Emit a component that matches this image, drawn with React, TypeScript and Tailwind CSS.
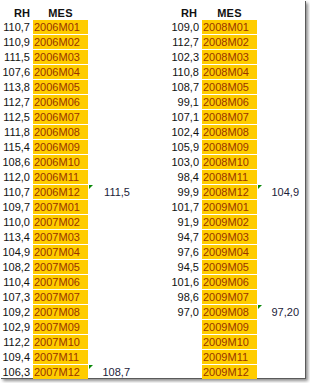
import React from "react";

type Row = {
  rh: string;
  mes: string;
  note?: string;
};

const left: Row[] = [
  { rh: "110,7", mes: "2006M01" },
  { rh: "110,9", mes: "2006M02" },
  { rh: "111,5", mes: "2006M03" },
  { rh: "107,6", mes: "2006M04" },
  { rh: "113,8", mes: "2006M05" },
  { rh: "112,7", mes: "2006M06" },
  { rh: "112,5", mes: "2006M07" },
  { rh: "111,8", mes: "2006M08" },
  { rh: "115,4", mes: "2006M09" },
  { rh: "108,6", mes: "2006M10" },
  { rh: "112,0", mes: "2006M11" },
  { rh: "110,7", mes: "2006M12", note: "111,5" },
  { rh: "109,7", mes: "2007M01" },
  { rh: "110,0", mes: "2007M02" },
  { rh: "113,4", mes: "2007M03" },
  { rh: "104,9", mes: "2007M04" },
  { rh: "108,2", mes: "2007M05" },
  { rh: "110,4", mes: "2007M06" },
  { rh: "107,3", mes: "2007M07" },
  { rh: "109,2", mes: "2007M08" },
  { rh: "102,9", mes: "2007M09" },
  { rh: "112,2", mes: "2007M10" },
  { rh: "109,4", mes: "2007M11" },
  { rh: "106,3", mes: "2007M12", note: "108,7" },
];

const right: Row[] = [
  { rh: "109,0", mes: "2008M01" },
  { rh: "112,7", mes: "2008M02" },
  { rh: "102,3", mes: "2008M03" },
  { rh: "110,8", mes: "2008M04" },
  { rh: "108,7", mes: "2008M05" },
  { rh: "99,1", mes: "2008M06" },
  { rh: "107,1", mes: "2008M07" },
  { rh: "102,4", mes: "2008M08" },
  { rh: "105,9", mes: "2008M09" },
  { rh: "103,0", mes: "2008M10" },
  { rh: "98,4", mes: "2008M11" },
  { rh: "99,9", mes: "2008M12", note: "104,9" },
  { rh: "101,7", mes: "2009M01" },
  { rh: "91,9", mes: "2009M02" },
  { rh: "94,7", mes: "2009M03" },
  { rh: "97,6", mes: "2009M04" },
  { rh: "94,5", mes: "2009M05" },
  { rh: "101,6", mes: "2009M06" },
  { rh: "98,6", mes: "2009M07" },
  { rh: "97,0", mes: "2009M08", note: "97,20" },
  { rh: "", mes: "2009M09" },
  { rh: "", mes: "2009M10" },
  { rh: "", mes: "2009M11" },
  { rh: "", mes: "2009M12" },
];

const Mark = () => (
  <span className="absolute left-[1px] top-0 h-0 w-0 border-t-[4px] border-r-[4px] border-t-[#0a8a0a] border-r-transparent" />
);

const NoteCell = ({ note, pad }: { note?: string; pad: string }) => (
  <div className={`relative h-[14px] text-right text-[#1c1c3a] ${pad}`}>
    {note && <Mark />}
    {note}
  </div>
);

export default function App() {
  return (
    <div className="h-[383px] w-[310px] bg-white">
      <div
        className="h-[378px] w-[305px] bg-white pt-[5px] text-[11px] leading-[14px] text-[#111] shadow-[1px_1px_0_#5a5a5a,3px_3px_3px_rgba(0,0,0,0.45)]"
        style={{ fontFamily: '"Liberation Sans", Arial, sans-serif' }}
      >
        {/* header */}
        <div className="grid h-[15px] grid-cols-[33px_55px_42px_72px_55px_48px] items-center font-bold">
          <div className="pr-[3px] text-right">RH</div>
          <div className="text-center tracking-[0.3px]">MES</div>
          <div />
          <div className="pr-[5px] text-right">RH</div>
          <div className="text-center tracking-[0.3px]">MES</div>
          <div />
        </div>

        {left.map((l, i) => {
          const r = right[i];
          return (
            <div
              key={l.mes}
              className="grid h-[15px] grid-cols-[33px_55px_42px_72px_55px_48px] items-start"
            >
              <div className="h-[14px] pr-[3px] text-right">{l.rh}</div>
              <div className="h-[14px] bg-[#ffcc00] pl-[1px] text-[#993300]">
                {l.mes}
              </div>
              <NoteCell note={l.note} pad="pr-0" />
              <div className="h-[14px] pr-[3px] text-right">{r.rh}</div>
              <div className="h-[14px] bg-[#ffcc00] pl-[1px] text-[#993300]">
                {r.mes}
              </div>
              <NoteCell note={r.note} pad="pr-[6px]" />
            </div>
          );
        })}
      </div>
    </div>
  );
}
